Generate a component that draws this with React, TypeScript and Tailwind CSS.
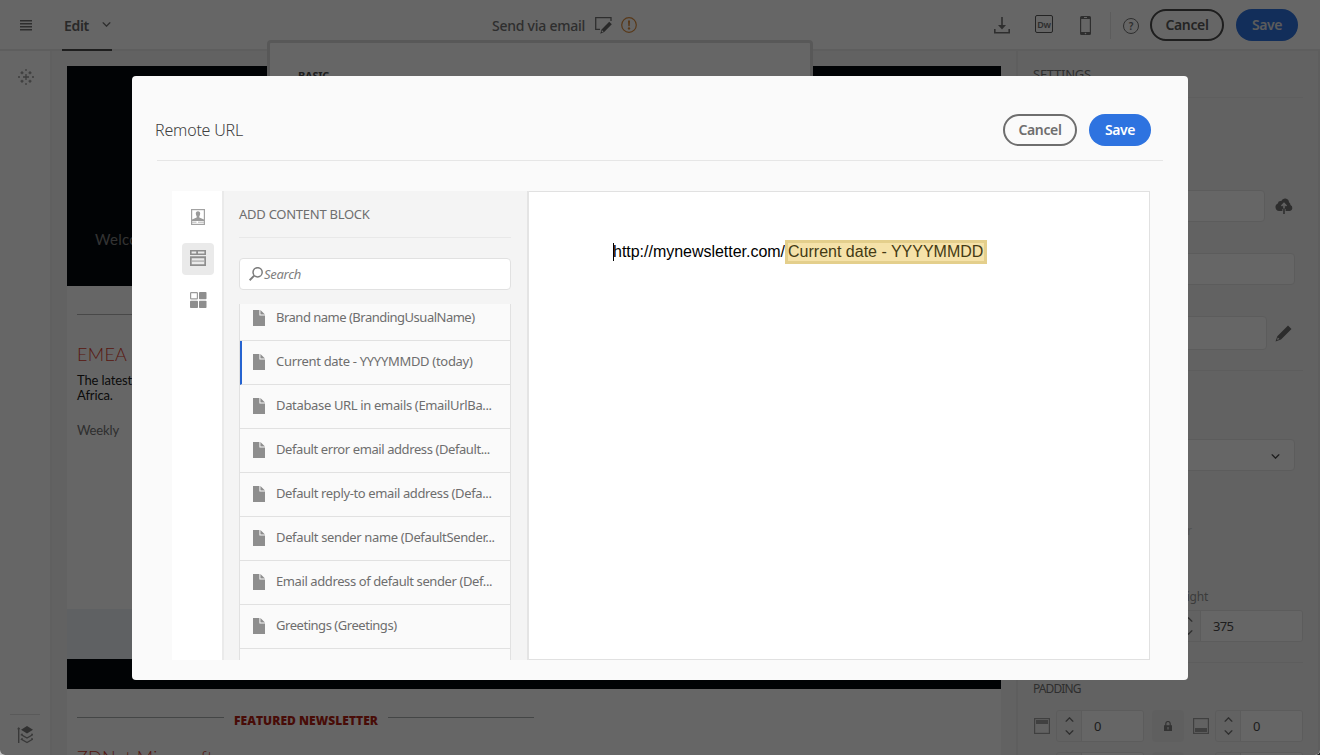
import React from 'react';

const blocks: { label: string; tracking: string; selected?: boolean }[] = [
  { label: 'Brand name (BrandingUsualName)', tracking: 'tracking-[-0.5px]' },
  { label: 'Current date - YYYYMMDD (today)', tracking: 'tracking-[-0.31px]', selected: true },
  { label: 'Database URL in emails (EmailUrlBa...', tracking: 'tracking-[-0.34px]' },
  { label: 'Default error email address (Default...', tracking: 'tracking-[-0.41px]' },
  { label: 'Default reply-to email address (Defa...', tracking: 'tracking-[-0.37px]' },
  { label: 'Default sender name (DefaultSender...', tracking: 'tracking-[-0.36px]' },
  { label: 'Email address of default sender (Def...', tracking: 'tracking-[-0.4px]' },
  { label: 'Greetings (Greetings)', tracking: 'tracking-[-0.46px]' },
];

function Chevron({ className, up = false }: { className: string; up?: boolean }) {
  return (
    <svg viewBox="0 0 10 6" className={className} fill="none" stroke="currentColor" strokeWidth="1.6" strokeLinecap="round">
      <path d={up ? 'M1 5l4-4 4 4' : 'M1 1l4 4 4-4'} />
    </svg>
  );
}

function ActionButtons({ strong = false }: { strong?: boolean }) {
  return (
    <div className="flex gap-3 text-[14px] font-semibold">
      <button className={`h-8 w-[74px] rounded-full border-2 leading-none tracking-[-0.37px] ${strong ? 'border-[#4b4b4b] text-[#5b5b5b]' : 'border-[#6e6e6e] text-[#6e6e6e]'}`}>Cancel</button>
      <button className={`h-8 w-[62px] rounded-full bg-[#2e73e0] leading-none tracking-[-0.4px] ${strong ? 'text-[#e4e4e4]' : 'text-white'}`}>Save</button>
    </div>
  );
}

function TopBar() {
  return (
    <header className="flex h-[51px] shrink-0 items-stretch border-b-2 border-[#ebebeb] bg-white pr-[22px] pl-5 text-[#747474]">
      <svg viewBox="0 0 12 11" className="mt-[20px] h-[11px] w-3" fill="#747474">
        <path d="M0 0h12v1.600H0zM0 3h12v1.600H0zM0 6h12v1.600H0zM0 9h12v1.600H0z" />
      </svg>
      <div className="-mb-[2px] ml-[30px] flex h-[51px] w-[50px] items-start border-b-2 border-[#4b4b4b] pt-[15px] pl-0.5">
        <span className="text-[14px] leading-[21px] font-semibold tracking-[-0.31px] text-[#666666]">Edit</span>
        <Chevron className="mt-[7px] ml-[13px] h-[5px] w-[9px] shrink-0" />
      </div>
      <div className="ml-[380px] flex w-[502px] items-start pt-[15px]">
        <span className="w-[103px] text-[14px] leading-[21px] font-medium tracking-[-0.25px]">Send via email</span>
        <svg viewBox="0 0 17 17" className="mt-[2px] h-[17px] w-[17px]" fill="none">
          <path d="M16 4V.7H.7v11.600H5" stroke="#747474" strokeWidth="1.300" />
          <path d="M14.200 4.700l2.600 2.600-7.600 7.800-3.900 1.600 1.300-4.200z" fill="#666666" />
          <path d="M7.200 13.300l1.400 1.400-1.500.6-.5-.5z" fill="#fff" />
        </svg>
        <svg viewBox="0 0 16 16" className="mt-[2px] ml-[9px] h-4 w-4" fill="none">
          <circle cx="8" cy="8" r="7.300" stroke="#dc8c3c" strokeWidth="1.200" />
          <path d="M7 3.400h2L8.700 9.200H7.300z" fill="#dc8c3c" />
          <circle cx="8" cy="11.400" r="1.200" fill="#dc8c3c" />
        </svg>
      </div>
      <svg viewBox="0 0 16 17" className="mt-[17px] h-[17px] w-4" fill="none" stroke="#747474">
        <path d="M8 0v10" strokeWidth="1.600" />
        <path d="M4 8h8l-4 4.600z" fill="#747474" stroke="none" />
        <path d="M.8 12v3.800h14.400V12" strokeWidth="1.600" />
      </svg>
      <div className="mt-[15px] ml-[25px] flex h-[18px] w-[18px] items-center justify-center rounded-[2px] border-[1.5px] border-[#5b5b5b] text-[9px] leading-none font-semibold tracking-[-0.3px]">Dw</div>
      <svg viewBox="0 0 11 19" className="mt-[16px] ml-[27px] h-[19px] w-[11px]">
        <path fillRule="evenodd" d="M1.500 0h8A1.500 1.500 0 0 1 11 1.500v16a1.500 1.500 0 0 1-1.500 1.500h-8A1.500 1.500 0 0 1 0 17.500v-16A1.500 1.500 0 0 1 1.500 0zM1.200 3v13h8.600V3zM4 1v1h3V1zM5.500 16.700a.8.8 0 1 0 0 1.600.8.8 0 0 0 0-1.600z" fill="#747474" />
      </svg>
      <div className="mt-3 ml-[19px] h-[27px] w-px bg-[#e6e6e6]" />
      <div className="mt-[18px] mr-[11px] ml-3 flex h-4 w-4 items-center justify-center rounded-full border border-[#747474] text-[10px] leading-none font-semibold">?</div>
      <div className="pt-[9px]">
        <ActionButtons strong />
      </div>
    </header>
  );
}

function LeftRail() {
  return (
    <aside className="flex w-[52px] shrink-0 flex-col items-center justify-between border-r-2 border-[#f0f0f0] bg-white pt-[18px] pb-[11px]">
      <svg viewBox="0 0 16 16" className="ml-[2px] h-4 w-4" stroke="#999999" strokeWidth="1.300" fill="none">
        <path d="M8 5v6M5 8h6M8 0v2M8 14v2M0 8h2M14 8h2M4 2.300v3M2.500 3.800h3M12 2.300v3M10.500 3.800h3M4 10.700v3M2.500 12.200h3M12 10.700v3M10.500 12.200h3" />
      </svg>
      <div className="flex w-full flex-col items-center">
        <div className="mb-[11px] h-px w-[30px] bg-[#e1e1e1]" />
        <svg viewBox="0 0 16 18" className="h-[18px] w-4" fill="none" stroke="#8e8e8e" strokeWidth="1.400">
          <path d="M1.700 2v15" />
          <path d="M0 3.200L1.700 1l1.700 2.200z" fill="#8e8e8e" stroke="none" />
          <path d="M10 0l6 3.800-6 3.800-6-3.800z" fill="#7a7a7a" stroke="none" />
          <path d="M5.500 7.800l-1 1L10 12l5.500-3.200-1-1M5.500 12.300l-1 1L10 16.500l5.500-3.200-1-1" />
        </svg>
      </div>
    </aside>
  );
}

function Canvas() {
  return (
    <main className="w-[964px] shrink-0 overflow-hidden bg-[#f5f5f5] pt-[15px] pl-[15px] font-[Lato,sans-serif]">
      <div className="h-[689px] w-[934px] bg-white">
        <div className="h-[220px] bg-[#04080d] pt-[162px] pl-7 text-[15px] leading-[22px] tracking-[0.3px] text-[#808080]">Welcome</div>
        <div className="flex h-[323px] flex-col px-[10px] pt-7">
          <div className="h-px w-[456px] shrink-0 bg-[#b4b4b4]" />
          <div className="mt-[27px] text-[18px] leading-6 font-light tracking-[0.3px] text-[#dc3c2d]">EMEA</div>
          <div className="mt-[7px] text-[13px] leading-[15px] tracking-[-0.12px] text-[#1c1c1c]">The latest from<br />Africa.</div>
          <div className="mt-5 text-[13px] leading-[15px] tracking-[-0.14px] text-[#747474]">Weekly</div>
        </div>
        <div className="h-[50px] bg-[#edf2f8]" />
        <div className="h-[30px] bg-[#04080d]" />
        <div className="flex w-[467px] items-center justify-between pt-6 pl-[10px]">
          <div className="-mt-[7px] h-px w-[147px] bg-[#aaaeae]" />
          <div className="font-['Open_Sans',sans-serif] text-[12px] leading-4 font-extrabold tracking-[0.05px] text-[#b41e12]">FEATURED NEWSLETTER</div>
          <div className="-mt-[7px] h-px w-[146px] bg-[#aaaeae]" />
        </div>
        <div className="mt-[16px] pl-[10px] text-[18px] leading-6 font-light tracking-[0.26px] text-[#d23c2d]">ZDNet Microsoft</div>
      </div>
    </main>
  );
}

function Stepper({ value, className }: { value: string; className: string }) {
  return (
    <div className={`flex h-8 shrink-0 overflow-hidden rounded-[3px] border border-[#e6e6e6] ${className}`}>
      <div className="flex w-[25px] shrink-0 flex-col items-center justify-between border-r border-[#e6e6e6] py-[6px]">
        <Chevron up className="h-[5px] w-[9px]" />
        <Chevron className="h-[5px] w-[9px]" />
      </div>
      <div className="flex-1 bg-white pl-3 text-[13px] leading-[30px] tracking-[-0.7px] text-[#4b4b4b]">{value}</div>
    </div>
  );
}

function EdgeIcon({ bottom = false }: { bottom?: boolean }) {
  return (
    <svg viewBox="0 0 16 16" className="h-4 w-4 shrink-0">
      <rect x=".6" y=".6" width="14.800" height="14.800" fill="none" stroke="#a0a0a0" strokeWidth="1.200" />
      <rect x="2" y={bottom ? 10 : 2} width="12" height="4" fill="#a0a0a0" />
    </svg>
  );
}

function PaddingRow({ linked = false }: { linked?: boolean }) {
  return (
    <div className="flex items-center pl-px">
      <EdgeIcon />
      <Stepper value="0" className="ml-[6px] w-[88px]" />
      <div className="ml-2 flex h-8 w-8 items-center justify-center rounded-[4px] bg-[#ededed]">
        {linked && (
          <svg viewBox="0 0 8 10" className="h-[10px] w-2">
            <path d="M1.800 5V2.700a2.200 2.200 0 0 1 4.400 0V5" fill="none" stroke="#808080" strokeWidth="1.200" />
            <path fillRule="evenodd" d="M0 4.200h8V10H0zM3.400 6v2.500h1.200V6z" fill="#808080" />
          </svg>
        )}
      </div>
      <div className="ml-[9px]"><EdgeIcon bottom /></div>
      <Stepper value="0" className="ml-[6px] w-[88px]" />
    </div>
  );
}

function Settings() {
  return (
    <aside className="flex w-[304px] shrink-0 flex-col overflow-hidden border-r-2 border-l-2 border-[#ebebeb] bg-[#f5f5f5] pr-[15px] pl-[15px] text-[#747474]">
      <div className="mt-[14px] text-[13px] leading-[18px] tracking-[-0.25px]">SETTINGS</div>
      <div className="mt-[14px] h-px shrink-0 bg-[#ebebeb]" />
      <div className="mt-[92px] flex h-8 shrink-0 items-center">
        <div className="h-8 w-[232px] rounded-[4px] border border-[#e6e6e6] bg-white" />
        <svg viewBox="0 0 18 16" className="ml-[10px] h-4 w-[18px]">
          <path d="M4 13a4 4 0 0 1-1.200-7.600A3 3 0 0 1 6.300 3 4 4 0 0 1 14 4.200 3.200 3.200 0 0 1 15.500 7 3.200 3.200 0 0 1 15 13z" fill="#747474" />
          <path d="M9 5.500v5M6.500 8L9 5.500 11.500 8" fill="none" stroke="#f5f5f5" strokeWidth="1.600" />
          <path d="M8.200 11h1.600v5H8.200z" fill="#747474" />
          <path d="M7.400 11v2h.8v-2zM9.800 11v2h.8v-2z" fill="#f5f5f5" />
        </svg>
      </div>
      <div className="mt-[31px] h-8 w-[262px] shrink-0 rounded-[4px] border border-[#e6e6e6] bg-white" />
      <div className="mt-[31px] flex h-[34px] shrink-0 items-center">
        <div className="h-[34px] w-[234px] rounded-[4px] border border-[#e6e6e6] bg-white" />
        <svg viewBox="0 0 17 17" className="ml-2 h-[17px] w-[17px]">
          <path fillRule="evenodd" d="M13 .5L16.500 4 6 14.500.5 16.500l1.800-5.300zM2.800 12.500L2 15l2.500-1z" fill="#6e6e6e" />
        </svg>
      </div>
      <div className="mt-5 h-px shrink-0 bg-[#e8e8e8]" />
      <div className="mt-[68px] flex h-8 w-[262px] shrink-0 items-center justify-end rounded-[4px] border border-[#e6e6e6] bg-white pr-[14px]">
        <Chevron className="mt-[3px] h-[5px] w-[9px] text-[#4b4b4b]" />
      </div>
      <div className="mt-[51px] w-[159px] text-right text-[12px] leading-[18px] text-[#cccccc]">Color</div>
      <div className="mt-[48px] w-[175px] text-right text-[12px] leading-[18px] tracking-[-0.25px] text-[#959595]">Height</div>
      <div className="mt-[4px] flex justify-end">
        <Stepper value="375" className="w-[128px]" />
      </div>
      <div className="mt-5 h-px shrink-0 bg-[#e8e8e8]" />
      <div className="mt-[17px] mb-[12px] text-[12px] leading-[18px] tracking-[-0.9px]">PADDING</div>
      <div className="flex flex-col gap-[10px]">
        <PaddingRow linked />
        <PaddingRow />
      </div>
    </aside>
  );
}

function BlockList() {
  return (
    <ul className="mt-[14px] flex-1 overflow-hidden border-x border-[#e1e1e1] bg-[#fafafa]">
      {blocks.map((b, i) => (
        <li
          key={b.label}
          className={`flex items-start border-b border-[#e1e1e1] pt-[10px] ${i === 0 ? '-mt-[7px]' : ''} h-11 ${b.selected ? 'border-l-2 border-l-[#2563d0] pl-[11px]' : 'pl-[13px]'}`}
        >
          <svg viewBox="0 0 12 16" className="mt-[3px] h-4 w-3 shrink-0" fill="#8e8e8e">
            <path d="M0 0h6.400v5.600H12V16H0zM7.400 0L12 4.600H7.400z" />
          </svg>
          <span className={`ml-[11px] text-[13px] leading-5 whitespace-nowrap text-[#6e6e6e] ${b.tracking}`}>{b.label}</span>
        </li>
      ))}
    </ul>
  );
}

function RemoteUrlDialog() {
  return (
    <section className="flex h-[604px] w-[1056px] flex-col rounded-[4px] bg-[#fafafa]">
      <div className="mr-[25px] ml-[25px] flex h-[85px] items-end justify-between border-b border-[#e6e6e6] pr-3 pb-[14px]">
        <h1 className="mb-1 -ml-[2px] text-[16px] leading-6 font-light tracking-[-0.2px] text-[#404040]">Remote URL</h1>
        <ActionButtons />
      </div>
      <div className="mt-[30px] mr-[38px] ml-10 flex h-[469px]">
        <nav className="flex w-[52px] shrink-0 flex-col items-center border-r-2 border-[#eaeaea] bg-white pt-[18px]">
          <svg viewBox="0 0 16 16" className="ml-[2px] h-4 w-4">
            <rect x="1.600" y=".6" width="12.800" height="14.800" fill="none" stroke="#a2a2a2" strokeWidth="1.200" />
            <path d="M8 2.200c1.500 0 2.300 1 2.200 2.600C10.100 6 9.700 6.800 9.300 7.300v1.200l4.700 2V12H2v-1.500l4.700-2V7.300C6.300 6.800 5.900 6 5.800 4.800 5.700 3.200 6.500 2.200 8 2.200z" fill="#9a9a9a" />
            <path d="M2 13.200h4.500M8 13.200h6" stroke="#b4b4b4" strokeWidth="1" />
          </svg>
          <div className="mt-[18px] ml-[2px] flex h-8 w-8 items-center justify-center rounded-[4px] bg-[#eaeaea]">
            <svg viewBox="0 0 16 16" className="mb-[2px] h-4 w-4">
              <path fillRule="evenodd" d="M0 0h16v5H0zM1.600 1.600v1.800h4.600V1.600zM8 1.600v1.800h6.400V1.600zM0 6.200h16V16H0zM1.700 8.200v6h12.600v-6z" fill="#8e8e8e" />
              <path d="M2 10.400h12v1.400H2z" fill="#b0b0b0" />
            </svg>
          </div>
          <svg viewBox="0 0 17 16" className="mt-[17px] ml-[3px] h-4 w-[17px]">
            <rect x=".6" y=".6" width="6.800" height="6.200" rx=".6" fill="#fff" stroke="#9a9a9a" strokeWidth="1.200" />
            <rect x="9" y="0" width="7.500" height="7.200" rx=".8" fill="#8e8e8e" />
            <rect x="0" y="8.800" width="8" height="7.200" rx=".8" fill="#8e8e8e" />
            <rect x="9" y="8.800" width="7.500" height="7.200" rx=".8" fill="#8e8e8e" />
          </svg>
        </nav>
        <div className="flex w-[305px] shrink-0 flex-col border-r-2 border-[#e4e4e4] bg-[#f4f4f4] pr-4 pl-[15px]">
          <h2 className="h-[47px] border-b border-[#e8e8e8] pt-[14px] text-[13px] leading-[18px] tracking-[-0.26px] text-[#6e6e6e]">ADD CONTENT BLOCK</h2>
          <div className="mt-5 flex h-8 shrink-0 items-center rounded-[4px] border border-[#e1e1e1] bg-white pl-[9px]">
            <svg viewBox="0 0 14 14" className="h-[14px] w-[14px]" fill="none" stroke="#7c7c7c">
              <circle cx="8.600" cy="5.300" r="4.600" strokeWidth="1.500" />
              <path d="M5.200 8.600L.6 13.200" strokeWidth="2" />
            </svg>
            <span className="ml-px text-[13px] leading-5 tracking-[-0.3px] text-[#808080] italic">Search</span>
          </div>
          <BlockList />
        </div>
        <div className="flex-1 border border-l-0 border-[#e1e1e1] bg-white pt-[48px] pl-[84px]">
          <p className="flex h-6 items-center font-['Liberation_Sans',sans-serif] text-[16px] leading-6 text-black">
            <span className="h-[18px] w-px bg-black" />
            <span className="-ml-px tracking-[-0.02px]">http://mynewsletter.com/</span>
            <span className="h-6 w-[202px] border-[3px] border-[#e4cf8c] bg-[#f5e2a9] leading-[18px] whitespace-nowrap text-[#443a14]">Current date - YYYYMMDD</span>
          </p>
        </div>
      </div>
    </section>
  );
}

export default function App() {
  return (
    <div className="h-[755px] w-[1320px] bg-linear-to-r from-[#c4c4c4] to-[#222222] font-['Noto_Sans',sans-serif]">
      <div className="relative flex h-full w-full flex-col overflow-hidden rounded-b-[5px] bg-white">
        <TopBar />
        <div className="flex h-[704px] w-full shrink-0 overflow-hidden">
          <LeftRail />
          <Canvas />
          <Settings />
        </div>
        <div className="absolute top-[40px] left-[267px] h-[200px] w-[546px] rounded-[4px] border-[3px] border-[#dcdcdc] bg-white pt-[24px] pl-7 text-[11px] leading-[18px] font-bold tracking-[-0.27px] text-[#4b4b4b]">BASIC</div>
        <div className="absolute inset-0 bg-black/60 pt-[76px] pl-[132px]">
          <RemoteUrlDialog />
        </div>
      </div>
    </div>
  );
}
